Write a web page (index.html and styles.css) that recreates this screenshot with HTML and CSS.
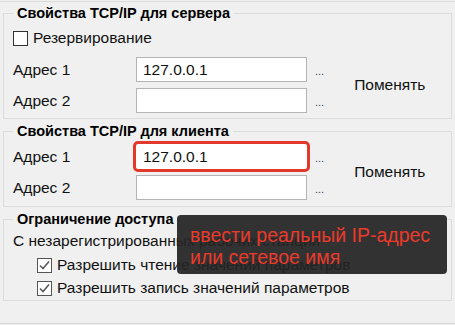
FILE: index.html
```html
<!DOCTYPE html>
<html lang="ru">
<head>
	<meta charset="UTF-8">
	<title>Свойства TCP/IP</title>
	<link rel="stylesheet" href="styles.css">
</head>
<body>
	<div class="topbar"></div>

	<fieldset class="group server">
		<legend>Свойства TCP/IP для сервера</legend>
		<label class="check">
			<span class="box"></span>
			Резервирование
		</label>
		<div class="addrBlock">
			<div class="addrRows">
				<span class="label">Адрес 1</span>
				<input class="addr" type="text" value="127.0.0.1">
				<span class="dots">...</span>
				<span class="label">Адрес 2</span>
				<input class="addr" type="text" value="">
				<span class="dots">...</span>
			</div>
			<button class="change">Поменять</button>
		</div>
	</fieldset>

	<fieldset class="group client">
		<legend>Свойства TCP/IP для клиента</legend>
		<div class="addrBlock">
			<div class="addrRows">
				<span class="label">Адрес 1</span>
				<input class="addr marked" type="text" value="127.0.0.1">
				<span class="dots">...</span>
				<span class="label">Адрес 2</span>
				<input class="addr" type="text" value="">
				<span class="dots">...</span>
			</div>
			<button class="change">Поменять</button>
		</div>
	</fieldset>

	<fieldset class="group access">
		<legend>Ограничение доступа</legend>
		<p class="note">С незарегистрированных рабочих станций</p>
		<label class="check sub">
			<span class="box checked">
				<svg width="13" height="13" viewBox="0 0 13 13"><path d="M2 6.5 L5 9.5 L11 2.5" fill="none" stroke="#5a5a5a" stroke-width="1.6"/></svg>
			</span>
			Разрешить чтение значений параметров
		</label>
		<label class="check sub">
			<span class="box checked">
				<svg width="13" height="13" viewBox="0 0 13 13"><path d="M2 6.5 L5 9.5 L11 2.5" fill="none" stroke="#5a5a5a" stroke-width="1.6"/></svg>
			</span>
			Разрешить запись значений параметров
		</label>
	</fieldset>

	<div class="bottombar"></div>

	<div class="hint">
		ввести реальный IP-адрес<br>
		или сетевое имя
	</div>
</body>
</html>
```

FILE: styles.css
```css
html, body {
	margin: 0;
	padding: 0;
}

body {
	width: 455px;
	height: 325px;
	overflow: hidden;
	background: #f0f0f0;
	font-family: "Liberation Sans", Arial, sans-serif;
	font-size: 15.5px;
	color: #111;
	position: relative;
}

.topbar {
	height: 1px;
	border-bottom: 1px solid #dadada;
}

.group {
	margin: 0 3px;
	padding: 0 10px 0 9px;
	border: 1px solid #dcdcdc;
	border-radius: 0;
}

.group legend {
	padding: 0 4px;
	font-size: 14.5px;
	font-weight: bold;
	line-height: 16px;
	color: #000;
}

.server {
	margin-top: 3px;
	padding-bottom: 5px;
}

.client {
	margin-top: 4px;
	padding-bottom: 6px;
}

.access {
	margin-top: 4px;
	padding-bottom: 4px;
}

.check {
	display: flex;
	align-items: center;
	gap: 5px;
	height: 16px;
	line-height: 16px;
}

.server .check {
	margin-top: 9px;
}

.box {
	width: 13px;
	height: 13px;
	background: #fff;
	border: 1px solid #333;
	display: flex;
	align-items: center;
	justify-content: center;
}

.box.checked {
	border-color: #555;
}

.addrBlock {
	display: flex;
	align-items: center;
}

.server .addrBlock {
	margin-top: 11px;
}

.client .addrBlock {
	margin-top: 5px;
}

.addrRows {
	display: grid;
	grid-template-columns: 123px 171px auto;
	row-gap: 6px;
	align-items: center;
}

.label {
	line-height: 16px;
}

.addr {
	box-sizing: border-box;
	width: 171px;
	height: 25px;
	margin: 0;
	padding: 0 6px;
	border: 1px solid #b4b4b4;
	background: #fff;
	font-family: inherit;
	font-size: 15.5px;
	color: #111;
}

.addr.marked {
	border-radius: 2px;
	outline: 3px solid #e2392c;
	border-color: #fff;
}

.dots {
	margin-left: 8px;
	margin-bottom: 5px;
	align-self: end;
	font-size: 11px;
	line-height: 12px;
	color: #3a3a60;
}

.change {
	margin-left: 30px;
	padding: 0;
	border: none;
	background: none;
	font-family: inherit;
	font-size: 15.5px;
	color: #111;
}

.note {
	margin: 6px 0 0;
	line-height: 16px;
}

.sub {
	margin-left: 24px;
	margin-top: 8px;
}

.sub + .sub {
	margin-top: 7px;
}

.bottombar {
	margin-top: 22px;
	border-top: 1px solid #d8d8d8;
}

.hint {
	position: absolute;
	left: 177px;
	top: 215px;
	width: 244px;
	height: 41px;
	padding: 9px 13px;
	border-radius: 4px;
	background: rgba(36, 36, 36, 0.93);
	color: #ea3a2c;
	font-size: 19.5px;
	line-height: 22px;
}
```
